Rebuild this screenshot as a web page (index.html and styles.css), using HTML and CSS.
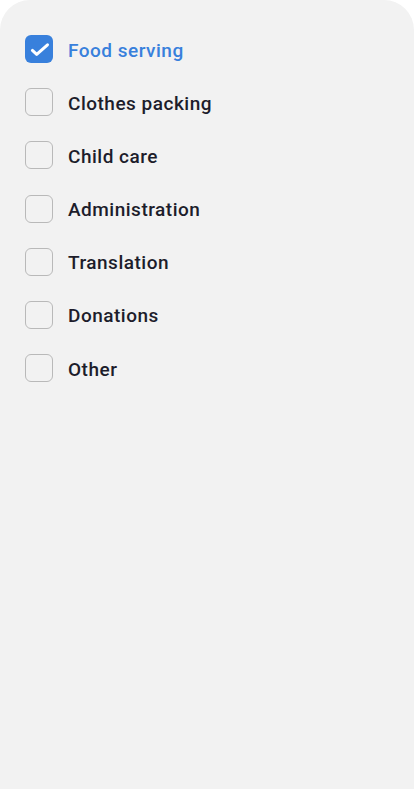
FILE: index.html
```html
<!DOCTYPE html>
<html>
<head>
<meta charset="utf-8">
<link rel="stylesheet" href="styles.css">
</head>
<body>
<div class="card">
  <ul class="list">
    <li class="item checked">
      <span class="box"><svg width="28" height="28" viewBox="0 0 28 28"><path d="M7.4 15.4l4.3 4 10.8-9.6" fill="none" stroke="#fff" stroke-width="3" stroke-linecap="round" stroke-linejoin="round"/></svg></span>
      <span class="label">Food serving</span>
    </li>
    <li class="item"><span class="box"></span><span class="label">Clothes packing</span></li>
    <li class="item"><span class="box"></span><span class="label">Child care</span></li>
    <li class="item"><span class="box"></span><span class="label">Administration</span></li>
    <li class="item"><span class="box"></span><span class="label">Translation</span></li>
    <li class="item"><span class="box"></span><span class="label">Donations</span></li>
    <li class="item"><span class="box"></span><span class="label">Other</span></li>
  </ul>
</div>
</body>
</html>
```
FILE: styles.css
```css
html, body {
  margin: 0;
  padding: 0;
  background: #ffffff;
}
body {
  font-family: Roboto, "Noto Sans", sans-serif;
}
.card {
  background: #f2f2f2;
  width: 414px;
  height: 789px;
  border-radius: 30px 30px 0 0;
  box-sizing: border-box;
  padding: 35px 25px 0 25px;
}
.list {
  list-style: none;
  margin: 0;
  padding: 0;
  display: flex;
  flex-direction: column;
  gap: 25.2px;
}
.item {
  display: flex;
  align-items: center;
  gap: 15px;
  height: 28px;
}
.box {
  width: 28px;
  height: 28px;
  box-sizing: border-box;
  border: 1.6px solid #b9b9b9;
  border-radius: 6px;
  display: flex;
  align-items: center;
  justify-content: center;
  flex-shrink: 0;
}
.checked .box {
  background: #3880dc;
  border: 0;
}
.label {
  font-size: 19px;
  font-weight: 500;
  letter-spacing: 0.5px;
  color: #1d1d2b;
  padding-top: 2px;
}
.checked .label {
  color: #3880dc;
}
```
